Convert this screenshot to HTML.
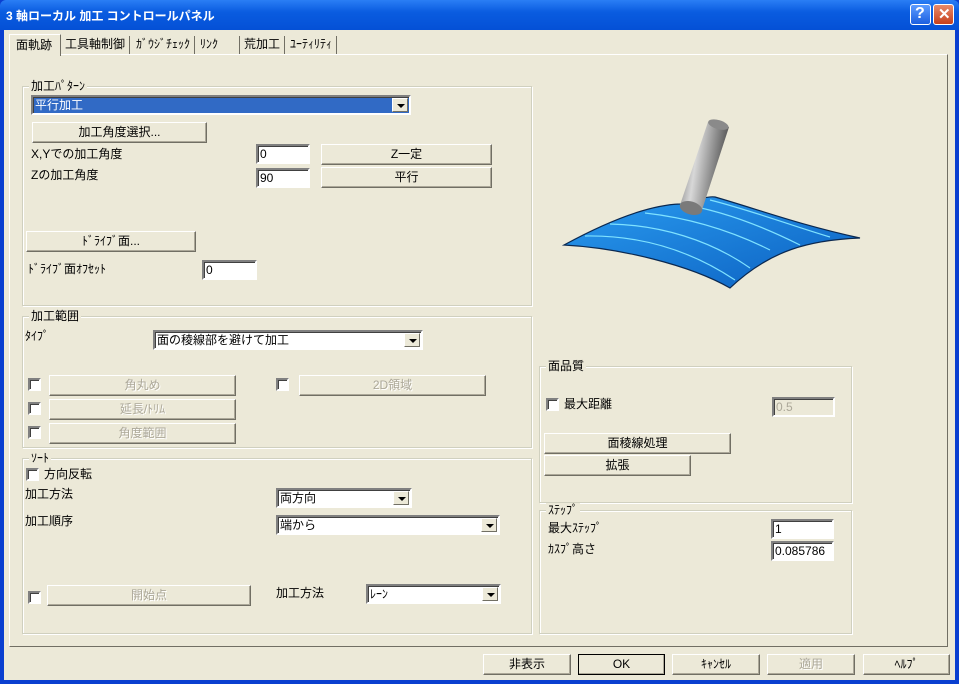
<!DOCTYPE html>
<html><head><meta charset="utf-8"><style>
*{box-sizing:border-box;margin:0;padding:0}
body{width:959px;height:684px;overflow:hidden;background:#0a3fd0;font-family:"Liberation Sans","Noto Sans CJK JP",sans-serif;font-size:12px;color:#000;position:relative}
.a{position:absolute}
#title{left:0;top:0;width:959px;height:30px;background:linear-gradient(#2a7ef5,#0a5ce0 40%,#0450d6);border-radius:6px 6px 0 0}
#title span{position:absolute;left:6px;top:7px;color:#fff;font-weight:bold;font-size:12px}
#client{left:4px;top:30px;width:951px;height:650px;background:#ECE9D8}
.tb{position:absolute;top:4px;width:21px;height:21px;border:1px solid #fff;border-radius:3px}
.grp{position:absolute;border:1px solid #d0d0bf;box-shadow:inset 1px 1px 0 #fff,1px 1px 0 #fff}
.grp>b{position:absolute;left:6px;top:-8px;background:#ECE9D8;font-weight:normal;padding:0 2px;line-height:14px}
.btn{position:absolute;height:21px;background:#ECE9D8;border:1px solid;border-color:#fff #716f64 #716f64 #fff;box-shadow:inset -1px -1px 0 #aca899;text-align:center;line-height:19px}
.dis{color:#aca899;text-shadow:1px 1px 0 #fff}
.ed{position:absolute;height:20px;background:#fff;border:2px solid;border-color:#808080 #fff #fff #808080;box-shadow:inset 1px 1px 0 #404040;padding-left:2px;line-height:16px}
.cb{position:absolute;width:13px;height:13px;background:#fff;border:2px solid;border-color:#808080 #fff #fff #808080;box-shadow:inset 1px 1px 0 #404040}
.dd{position:absolute;right:1px;top:1px;width:16px;height:14px;background:#ECE9D8;border:1px solid;border-color:#fff #716f64 #716f64 #fff}
.dd:after{content:"";position:absolute;left:4px;top:5px;border:4px solid transparent;border-top:4px solid #000;border-bottom:0}
.lb{position:absolute;line-height:14px}
.tab{position:absolute;top:36px;height:18px;line-height:16px;padding:0 4px;border-right:1px solid #716f64}
</style></head><body>
<div id="title" class="a"><span>3 軸ローカル 加工 コントロールパネル</span>
<div class="tb" style="left:910px;background:linear-gradient(#5c9cff,#1c5fe0)"><span style="left:4px;top:0;font-size:16px;color:#fff">?</span></div>
<div class="tb" style="left:933px;background:linear-gradient(#e88a6a,#c6401c)"><span style="left:4px;top:0;font-size:15px;color:#fff">✕</span></div>
</div>
<div id="client" class="a"></div>
<div class="a" style="left:9px;top:54px;width:939px;height:593px;border:1px solid;border-color:#fff #716f64 #716f64 #fff"></div>
<div class="a" style="left:9px;top:34px;width:52px;height:22px;background:#ECE9D8;border:1px solid;border-color:#fff #716f64 transparent #fff;border-bottom:none"></div>
<div class="lb" style="left:16px;top:38px">面軌跡</div>
<div class="tab" style="left:61px">工具軸制御</div>
<div class="tab" style="left:132px">ｶﾞｳｼﾞﾁｪｯｸ</div>
<div class="tab" style="left:196px;width:44px">ﾘﾝｸ</div>
<div class="tab" style="left:240px">荒加工</div>
<div class="tab" style="left:286px">ﾕｰﾃｨﾘﾃｨ</div>

<div class="grp" style="left:22px;top:86px;width:510px;height:220px"><b>加工ﾊﾟﾀｰﾝ</b></div>
<div class="ed" style="left:31px;top:95px;width:380px;background:#316ac5;color:#fff">平行加工<div class="dd"></div></div>
<div class="btn" style="left:32px;top:122px;width:175px">加工角度選択...</div>
<div class="lb" style="left:31px;top:147px">X,Yでの加工角度</div>
<div class="ed" style="left:256px;top:144px;width:54px">0</div>
<div class="btn" style="left:321px;top:144px;width:171px">Z一定</div>
<div class="lb" style="left:31px;top:168px">Zの加工角度</div>
<div class="ed" style="left:256px;top:168px;width:54px">90</div>
<div class="btn" style="left:321px;top:167px;width:171px">平行</div>
<div class="btn" style="left:26px;top:231px;width:170px">ﾄﾞﾗｲﾌﾞ面...</div>
<div class="lb" style="left:28px;top:262px">ﾄﾞﾗｲﾌﾞ面ｵﾌｾｯﾄ</div>
<div class="ed" style="left:202px;top:260px;width:55px">0</div>

<div class="grp" style="left:22px;top:316px;width:510px;height:132px"><b>加工範囲</b></div>
<div class="lb" style="left:25px;top:329px">ﾀｲﾌﾟ</div>
<div class="ed" style="left:153px;top:330px;width:270px">面の稜線部を避けて加工<div class="dd"></div></div>
<div class="cb" style="left:28px;top:378px"></div>
<div class="btn dis" style="left:49px;top:375px;width:187px">角丸め</div>
<div class="cb" style="left:276px;top:378px"></div>
<div class="btn dis" style="left:299px;top:375px;width:187px">2D領域</div>
<div class="cb" style="left:28px;top:402px"></div>
<div class="btn dis" style="left:49px;top:399px;width:187px">延長/ﾄﾘﾑ</div>
<div class="cb" style="left:28px;top:426px"></div>
<div class="btn dis" style="left:49px;top:423px;width:187px">角度範囲</div>

<div class="grp" style="left:22px;top:458px;width:510px;height:176px"><b>ｿｰﾄ</b></div>
<div class="cb" style="left:26px;top:468px"></div>
<div class="lb" style="left:44px;top:467px">方向反転</div>
<div class="lb" style="left:25px;top:487px">加工方法</div>
<div class="ed" style="left:276px;top:488px;width:136px">両方向<div class="dd"></div></div>
<div class="lb" style="left:25px;top:514px">加工順序</div>
<div class="ed" style="left:276px;top:515px;width:224px">端から<div class="dd"></div></div>
<div class="cb" style="left:28px;top:591px"></div>
<div class="btn dis" style="left:47px;top:585px;width:204px">開始点</div>
<div class="lb" style="left:276px;top:586px">加工方法</div>
<div class="ed" style="left:366px;top:584px;width:135px">ﾚｰﾝ<div class="dd"></div></div>

<div class="grp" style="left:539px;top:366px;width:313px;height:137px"><b>面品質</b></div>
<div class="cb" style="left:546px;top:398px"></div>
<div class="lb" style="left:564px;top:397px">最大距離</div>
<div class="ed dis" style="left:772px;top:397px;width:63px;background:#ECE9D8;text-shadow:none">0.5</div>
<div class="btn" style="left:544px;top:433px;width:187px">面稜線処理</div>
<div class="btn" style="left:544px;top:455px;width:147px">拡張</div>

<div class="grp" style="left:539px;top:510px;width:313px;height:124px"><b>ｽﾃｯﾌﾟ</b></div>
<div class="lb" style="left:548px;top:521px">最大ｽﾃｯﾌﾟ</div>
<div class="ed" style="left:771px;top:519px;width:63px">1</div>
<div class="lb" style="left:548px;top:542px">ｶｽﾌﾟ高さ</div>
<div class="ed" style="left:771px;top:541px;width:63px">0.085786</div>

<svg class="a" style="left:530px;top:100px" width="340" height="200" viewBox="0 0 340 200">
<defs><linearGradient id="s" x1="0" y1="0" x2="1" y2="1"><stop offset="0" stop-color="#2a9cf0"/><stop offset="1" stop-color="#0b5fc0"/></linearGradient>
<linearGradient id="c" x1="0" x2="1" y1="0" y2="0.25"><stop offset="0" stop-color="#6a6a6a"/><stop offset=".4" stop-color="#d8d8d8"/><stop offset="1" stop-color="#505050"/></linearGradient></defs>
<path d="M34 145 C80 120 120 105 150 104 C170 98 180 96 185 97 C230 110 270 125 330 138 C280 140 240 150 200 188 C160 165 90 148 34 145Z" fill="url(#s)" stroke="#0a2850" stroke-width="1.2"/>
<g fill="none" stroke="#7fe2ff" stroke-width="1.2">
<path d="M115 113 C160 118 200 130 240 150"/><path d="M80 124 C130 125 180 140 220 168"/><path d="M55 136 C110 135 160 150 205 180"/>
<path d="M150 104 C190 110 230 125 270 145"/><path d="M180 100 C220 110 260 125 300 137"/>
</g>
<path d="M178 22 L199 27 L172 110 L150 105Z" fill="url(#c)"/>
<ellipse cx="188.5" cy="24.5" rx="10.5" ry="4.5" transform="rotate(16 188 24)" fill="#8a8a8a"/>
<ellipse cx="161" cy="108" rx="11.5" ry="6.5" transform="rotate(16 161 108)" fill="#7a7a7a"/>
</svg>

<div class="btn" style="left:483px;top:654px;width:88px">非表示</div>
<div class="btn" style="left:578px;top:654px;width:87px;border:1px solid #000">OK</div>
<div class="btn" style="left:672px;top:654px;width:88px">ｷｬﾝｾﾙ</div>
<div class="btn dis" style="left:767px;top:654px;width:88px">適用</div>
<div class="btn" style="left:863px;top:654px;width:87px">ﾍﾙﾌﾟ</div>
</body></html>
